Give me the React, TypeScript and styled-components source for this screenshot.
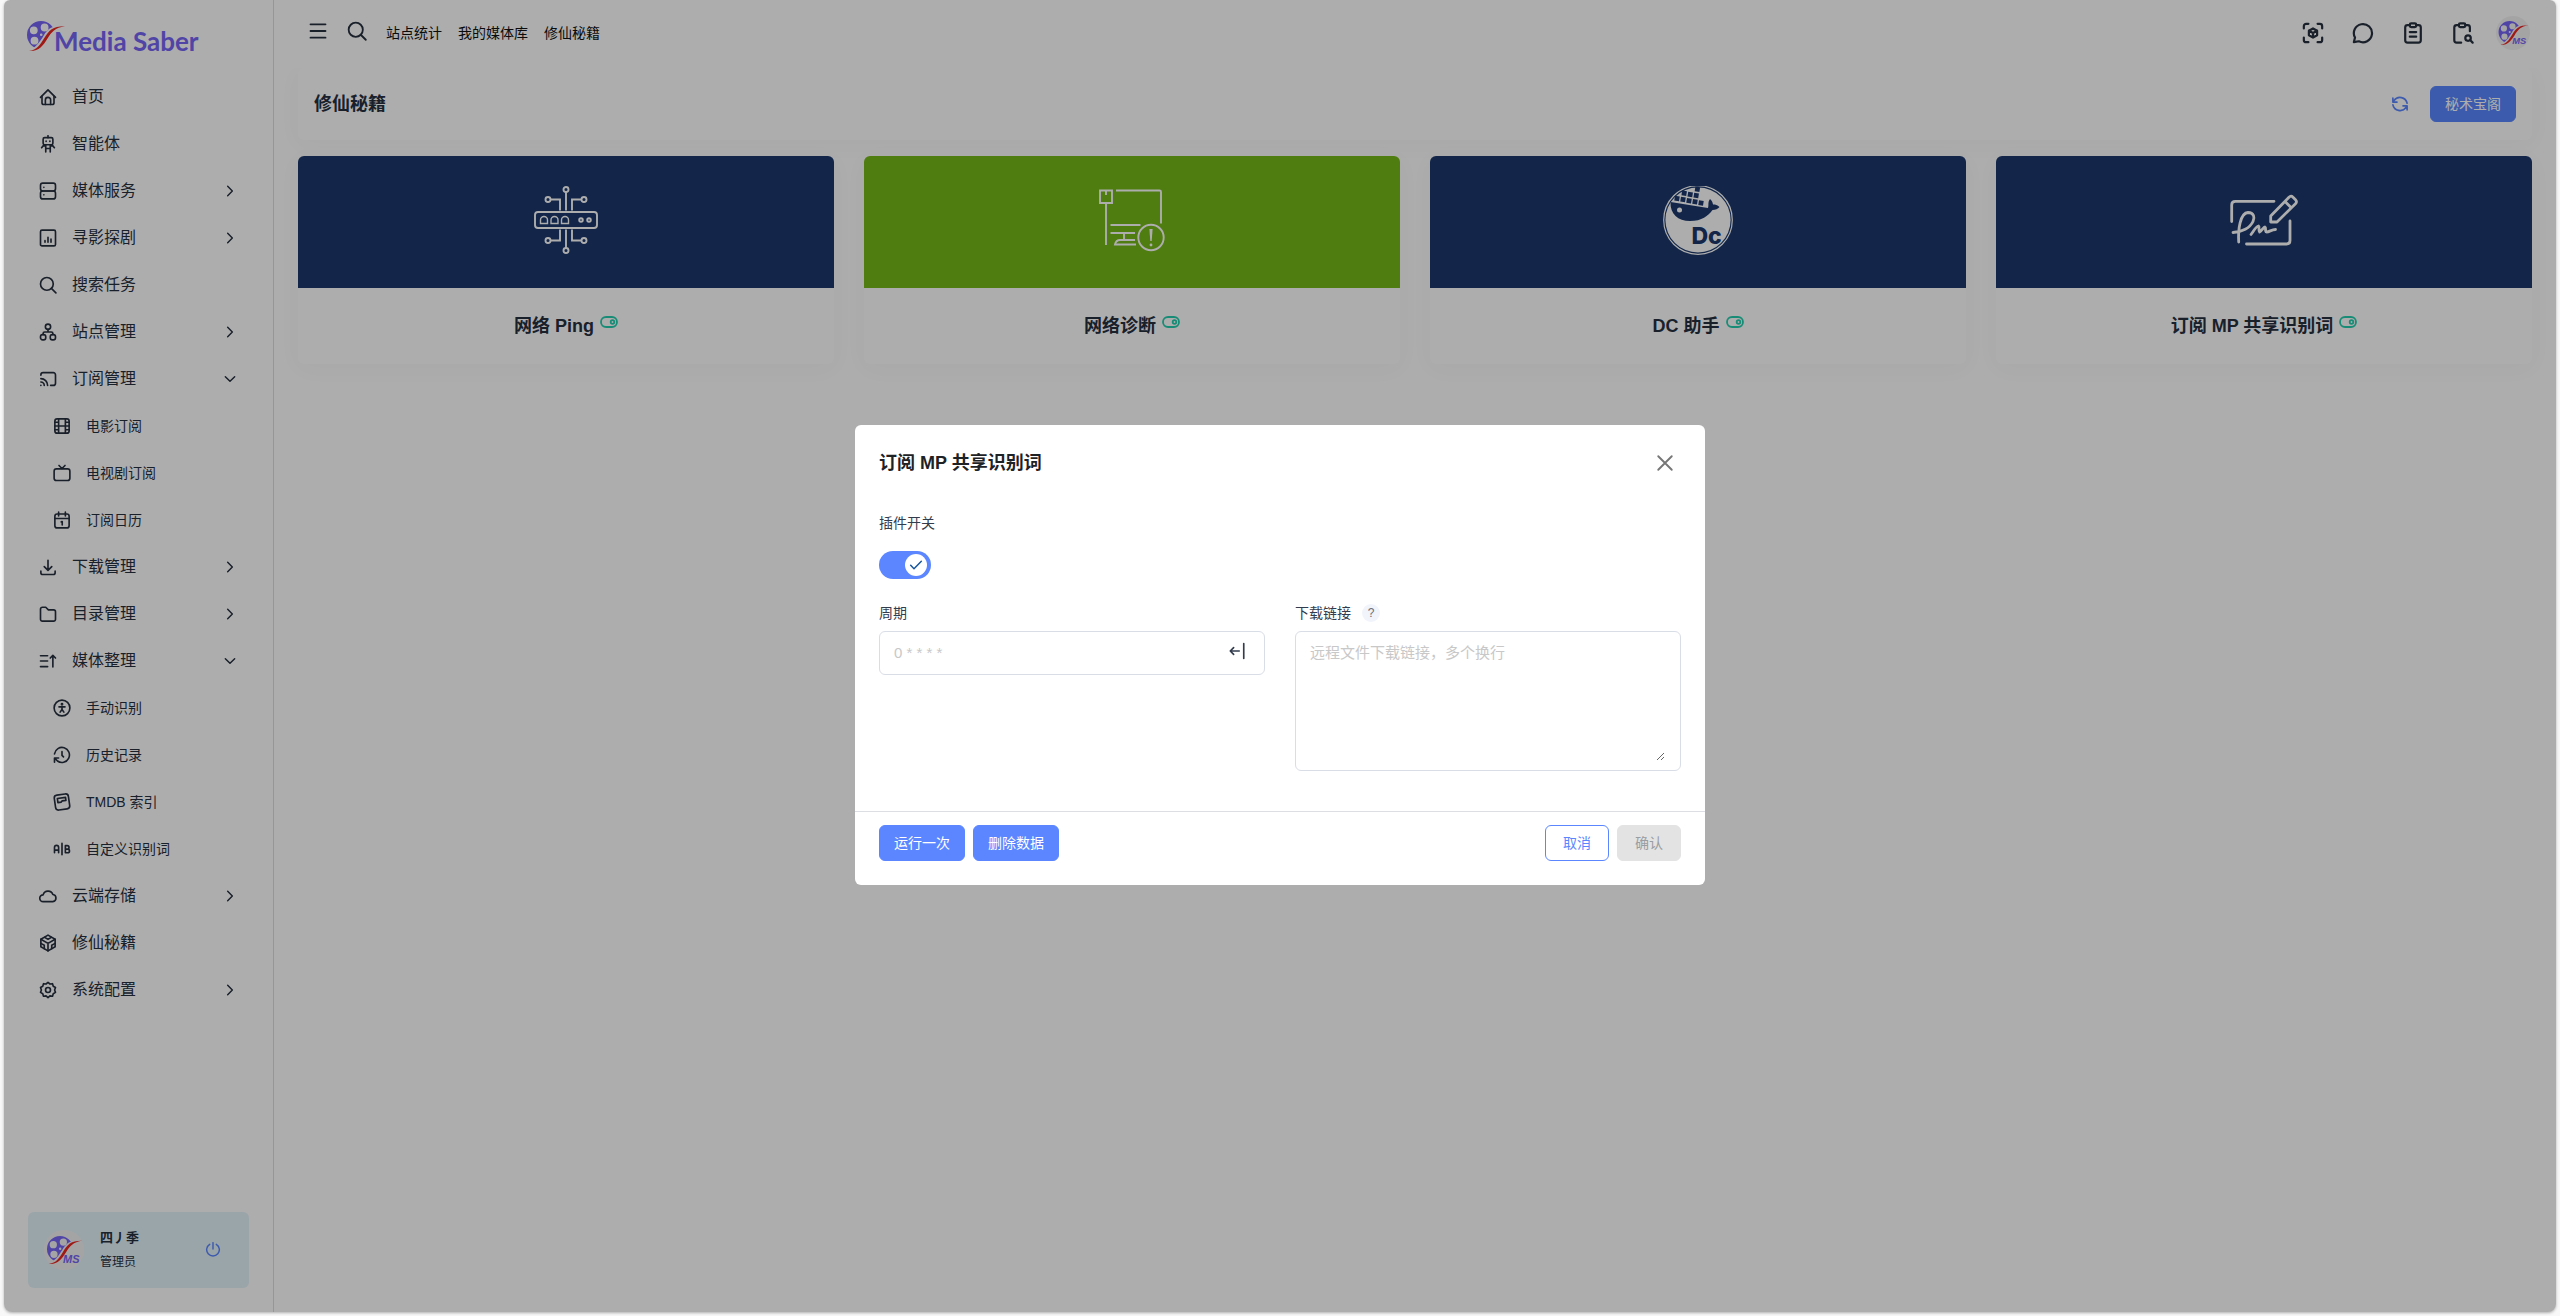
import React, { useState } from 'react';
import styled, { createGlobalStyle } from 'styled-components';

const GlobalStyle = createGlobalStyle`
  *, *::before, *::after { box-sizing: border-box; }
  body {
    margin: 0;
    background: #f8f8f8;
    color: #27303f;
    font-family: "Liberation Sans", "Noto Sans CJK SC", sans-serif;
    font-size: 14px;
  }
  button, input, textarea { font: inherit; }
  button { cursor: pointer; }
  h1, h2, h3, p, ul { margin: 0; padding: 0; }
`;

/* ---------- shell ---------- */

const Frame = styled.div`
  position: relative;
  display: grid;
  grid-template-columns: 270px minmax(0, 1fr);
  min-height: calc(100vh - 4px);
  margin: 0 4px 4px;
  overflow: hidden;
  border-radius: 6px 6px 8px 8px;
  background: #fff;
  box-shadow: 0 1px 3px rgba(0, 0, 0, 0.3);
`;

const Sidebar = styled.aside`
  display: flex;
  flex-direction: column;
  border-right: 1px solid #dedede;
`;

const Brand = styled.a`
  display: flex;
  align-items: center;
  height: 73px;
  padding: 0 22px;
  color: #7766f5;
  text-decoration: none;
`;

const BrandName = styled.span`
  margin-left: -14px;
  padding-top: 8px;
  font-family: Lato, sans-serif;
  font-size: 26px;
  font-weight: 700;
  line-height: 32px;
  white-space: nowrap;
`;

const Menu = styled.ul`
  flex: 1;
  list-style: none;
`;

const MenuLink = styled.a<{ $sub?: boolean }>`
  display: flex;
  align-items: center;
  gap: 15px;
  height: 47px;
  padding: 0 35px 0 ${(p) => (p.$sub ? 49 : 35)}px;
  color: #27303f;
  font-size: ${(p) => (p.$sub ? 14 : 16)}px;
  line-height: 24px;
  text-decoration: none;
`;

const MenuText = styled.span`
  flex: 1;
  white-space: nowrap;
`;

const UserPanel = styled.div`
  display: flex;
  align-items: center;
  height: 76px;
  margin: 24px;
  padding: 0 28px 0 16px;
  border-radius: 6px;
  background: #e4f3fb;
`;

const UserText = styled.div`
  flex: 1;
  margin-left: 16px;
`;

const UserName = styled.p`
  font-size: 13px;
  font-weight: 700;
  line-height: 24px;
`;

const UserRole = styled.p`
  font-size: 12px;
  line-height: 24px;
`;

const IconButton = styled.button<{ $color?: string }>`
  display: flex;
  align-items: center;
  justify-content: center;
  padding: 0;
  border: 0;
  background: none;
  color: ${(p) => p.$color ?? '#27303f'};
`;

/* ---------- top bar ---------- */

const TopBar = styled.header`
  position: relative;
  z-index: 1;
  display: flex;
  align-items: center;
  justify-content: space-between;
  height: 68px;
  padding: 0 26px 2px 34px;
  background: #fff;
`;

const TopLeft = styled.nav`
  display: flex;
  align-items: center;
  gap: 19px;
  padding-bottom: 4px;
`;

const TopLinks = styled.div`
  display: flex;
  gap: 16px;
  padding-top: 4px;
`;

const TopLink = styled.a`
  color: #111;
  font-size: 14px;
  line-height: 20px;
  text-decoration: none;
`;

const TopRight = styled.div`
  display: flex;
  align-items: center;
  gap: 22px;
`;

const Tools = styled.div`
  display: flex;
  align-items: center;
  gap: 28px;
`;

/* ---------- page ---------- */

const Page = styled.main`
  display: grid;
  gap: 16px;
  padding: 0 24px;
`;

const Panel = styled.section`
  border-radius: 6px;
  background: #fff;
  box-shadow: 0 4px 24px rgba(34, 41, 47, 0.03);
`;

const PageHead = styled(Panel)`
  display: flex;
  align-items: center;
  justify-content: space-between;
  height: 72px;
  padding: 0 16px;
`;

const PageTitle = styled.h1`
  font-size: 18px;
  line-height: 28px;
`;

const PageActions = styled.div`
  display: flex;
  align-items: center;
  gap: 21px;
`;

const Button = styled.button<{ $kind?: 'primary' | 'outline' | 'muted' }>`
  height: 36px;
  padding: 0 14px;
  border: 1px solid;
  border-radius: 6px;
  font-size: 14px;
  line-height: 20px;
  white-space: nowrap;
  ${(p) =>
    p.$kind === 'outline'
      ? 'min-width: 64px; border-color: #5b86ff; background: #fff; color: #5b86ff;'
      : p.$kind === 'muted'
        ? 'min-width: 64px; border-color: #e3e3e3; background: #e3e3e3; color: #9a9da1; cursor: default;'
        : 'border-color: #5b86ff; background: #5b86ff; color: #fff;'}
`;

const CardGrid = styled.div`
  display: grid;
  grid-template-columns: repeat(4, minmax(0, 1fr));
  gap: 30px;
`;

const Card = styled(Panel).attrs({ as: 'article' })`
  overflow: hidden;
`;

const CardArt = styled.div<{ $color: string }>`
  display: flex;
  align-items: center;
  justify-content: center;
  height: 132px;
  background: ${(p) => p.$color};
  color: #fff;
`;

const CardBody = styled.div`
  display: flex;
  justify-content: center;
  gap: 6px;
  padding: 24px 16px;
  color: #24cfae;
`;

const CardTitle = styled.h2`
  color: #27303f;
  font-size: 18px;
  line-height: 28px;
`;

/* ---------- dialog ---------- */

const Backdrop = styled.div`
  position: absolute;
  inset: 0;
  z-index: 2;
  display: flex;
  align-items: center;
  justify-content: center;
  padding-bottom: 2px;
  background: rgba(0, 0, 0, 0.32);
`;

const Dialog = styled.form`
  width: 850px;
  max-width: 100%;
  border-radius: 6px;
  background: #fff;
`;

const DialogHead = styled.div`
  display: flex;
  align-items: center;
  justify-content: space-between;
  padding: 24px 31px 24px 24px;
`;

const DialogTitle = styled.h2`
  color: #1f2225;
  font-size: 18px;
  line-height: 28px;
`;

const DialogBody = styled.div`
  display: grid;
  grid-template-columns: repeat(2, minmax(0, 1fr));
  gap: 24px 30px;
  padding: 12px 24px 40px;
`;

const Field = styled.div<{ $wide?: boolean; $gap?: number }>`
  display: flex;
  flex-direction: column;
  gap: ${(p) => p.$gap ?? 8}px;
  ${(p) => (p.$wide ? 'grid-column: 1 / -1;' : '')}
`;

const LabelRow = styled.div`
  display: flex;
  align-items: center;
  gap: 11px;
  height: 20px;
`;

const Label = styled.label`
  color: #333c4d;
  font-size: 14px;
  line-height: 20px;
`;

const Hint = styled.span`
  width: 18px;
  height: 18px;
  border-radius: 50%;
  background: #f1f4fb;
  color: #6b7078;
  font-size: 12px;
  line-height: 19px;
  text-align: center;
`;

const Switch = styled.span`
  position: relative;
  display: block;
  width: 52px;
  height: 28px;
`;

const SwitchInput = styled.input`
  appearance: none;
  width: 100%;
  height: 100%;
  margin: 0;
  border-radius: 14px;
  background: #c4c9d4;
  cursor: pointer;
  &:checked { background: #5b86ff; }
`;

const Knob = styled.span<{ $on: boolean }>`
  position: absolute;
  top: 3px;
  left: ${(p) => (p.$on ? 26 : 3)}px;
  display: flex;
  align-items: center;
  justify-content: center;
  width: 22px;
  height: 22px;
  border-radius: 50%;
  background: #fff;
  color: #17549c;
  pointer-events: none;
`;

const Box = styled.div`
  display: flex;
  border: 1px solid #d9dde6;
  border-radius: 6px;
`;

const InputBox = styled(Box)`
  align-items: center;
  height: 44px;
  padding: 0 18px 0 14px;
`;

const TextInput = styled.input`
  flex: 1;
  min-width: 0;
  padding: 0;
  border: 0;
  outline: 0;
  background: none;
  font-size: 15px;
  line-height: 22px;
  &::placeholder { color: #c8c8c8; }
`;

const InputAction = styled(IconButton)`
  padding-bottom: 4px;
`;

const AreaBox = styled(Box)`
  padding: 10px 15px 9px 14px;
`;

const TextArea = styled.textarea`
  display: block;
  width: 100%;
  height: 119px;
  padding: 0;
  border: 0;
  outline: 0;
  background: none;
  font-size: 15px;
  line-height: 22px;
  resize: vertical;
  &::placeholder { color: #c8c8c8; }
`;

const DialogFoot = styled.div`
  display: flex;
  justify-content: space-between;
  padding: 13px 24px 24px;
  border-top: 1px solid #dcdee4;
`;

const ButtonGroup = styled.div`
  display: flex;
  gap: 8px;
`;

/* ---------- icons ---------- */

type IconProps = { size?: number; stroke?: number; children: React.ReactNode };

const Icon = ({ size = 20, stroke = 2.2, children }: IconProps) => (
  <svg
    width={size}
    height={size}
    viewBox="0 0 24 24"
    fill="none"
    stroke="currentColor"
    strokeWidth={stroke}
    strokeLinecap="round"
    strokeLinejoin="round"
    aria-hidden="true"
  >
    {children}
  </svg>
);

const icons = {
  home: (
    <>
      <path d="M2 12.5 12 2.5l10 10" />
      <path d="M4 11v8.5A2.5 2.5 0 0 0 6.500 22h11a2.5 2.500 0 0 0 2.500-2.500V11" />
      <path d="M8.500 22v-6a3.500 3.500 0 0 1 7 0v6" />
    </>
  ),
  robot: (
    <>
      <rect x="5.500" y="3.500" width="13" height="9.500" rx="2" />
      <path d="M12 1v2.500M9.500 8v.5M14.500 8v.5M9 13v9.500M15 13v9.500M9 18h6M9 14.500H5.500L3.500 17M15 14.500h3.500l2 2.500" />
    </>
  ),
  server: (
    <>
      <rect x="2" y="1.500" width="20" height="10.500" rx="3" />
      <rect x="2" y="12" width="20" height="10.500" rx="3" />
      <path d="M6.500 7v.1M6.500 17v.1" />
    </>
  ),
  chart: (
    <>
      <rect x="2" y="1.500" width="20" height="21" rx="2" />
      <path d="M8 17.500v-2M12 17.500V11M16 17.500v-4" />
    </>
  ),
  search: (
    <>
      <circle cx="10.500" cy="10.500" r="8.500" />
      <path d="m16.500 16.500 6 6" />
    </>
  ),
  sites: (
    <>
      <circle cx="12" cy="5" r="3.500" />
      <rect x="2" y="15.500" width="7" height="7" rx="2.800" />
      <rect x="15" y="15.500" width="7" height="7" rx="2.800" />
      <path d="M12 8.500V12M5.500 15.500V14a2 2 0 0 1 2-2h9a2 2 0 0 1 2 2v1.500" />
    </>
  ),
  cast: (
    <>
      <path d="M2.500 20.500v.01M7 20.500A4.500 4.500 0 0 0 2.500 16M11.500 20.500a9 9 0 0 0-9-9" />
      <path d="M15.500 20.500H19a3 3 0 0 0 3-3v-11a3 3 0 0 0-3-3H5.500a3 3 0 0 0-3 3V7" />
    </>
  ),
  film: (
    <>
      <rect x="2.500" y="2.500" width="19" height="19" rx="3" />
      <path d="M7.500 2.500v19M16.500 2.500v19M7.500 12h9M2.500 7h5M2.500 12h5M2.500 17h5M16.500 7h5M16.500 12h5M16.500 17h5" />
    </>
  ),
  tv: (
    <>
      <rect x="1.500" y="6.500" width="21" height="15.500" rx="3" />
      <path d="m8 2 4 4 4-4" />
    </>
  ),
  calendar: (
    <>
      <rect x="2.500" y="4" width="19" height="18.500" rx="3" />
      <path d="M2.500 10h19M7.500 1.500v5M16.500 1.500v5M11 14.500l1.300-.5v4.500" />
    </>
  ),
  download: (
    <>
      <path d="M12 3v13M7 11.500l5 5 5-5M2.500 17.500v2A2.500 2.500 0 0 0 5 22h14a2.500 2.500 0 0 0 2.500-2.500v-2" />
    </>
  ),
  folder: (
    <path d="M4.500 3H9l3.500 3.500h7A2.500 2.500 0 0 1 22 9v10a2.500 2.500 0 0 1-2.500 2.500h-15A2.500 2.500 0 0 1 2 19V5.500A2.500 2.500 0 0 1 4.500 3z" />
  ),
  sort: <path d="M2 5h9.500M2 12h9.500M2 19.500h9.500M18.500 20V5M15 8l3.500-3.500L22 8" />,
  person: (
    <>
      <circle cx="12" cy="12" r="10.500" />
      <circle cx="12" cy="7" r=".8" fill="currentColor" />
      <path d="M8 10.500h8M12 10.500v3.500M9.500 17.500 12 14l2.500 3.500" />
    </>
  ),
  history: (
    <>
      <path d="M2 10.500A10 10 0 1 1 6 20M2 21.500V16h5.500M2.500 16.500 6 20" />
      <path d="M12 7.500v5l2 2" />
    </>
  ),
  card: (
    <g transform="rotate(-8 12 12)">
      <rect x="2.500" y="2" width="19" height="20" rx="4" />
      <path d="M6.500 6.500h11v4h-5l-1.500 1.500h-4.500z" />
    </g>
  ),
  ab: (
    <path d="M2 17v-7a2.500 2.500 0 0 1 5.500 0v7M2 13.500h5.500M12 4.500v15M16.500 7.500v9.500h3a2.500 2.400 0 0 0 0-4.800h-3 2.500a2.300 2.300 0 0 0 0-4.700z" />
  ),
  cloud: (
    <path d="M5.500 19.500a4.500 4.500 0 0 1 0-9 6.800 6.800 0 0 1 13-.5 4.800 4.800 0 0 1 0 9.500z" />
  ),
  cube: (
    <>
      <path d="M21.500 7v10L12 22.500 2.500 17V7L12 1.500z" />
      <path d="m2.500 7 9.500 5.500L21.500 7M12 12.500v10M7.500 4.500l4.500 2.500 4.500-2.500M2.500 12.500l4.500 2.500v4.500M21.500 12.500 17 15v4.500" />
    </>
  ),
  gear: (
    <>
      <path d="M12 1.800l2.600 2.200 3.400-.4 1 3.300 3 1.700-1.200 3.400L22 15.200l-3 1.800-1 3.300-3.400-.4L12 22.200l-2.600-2.300-3.400.4-1-3.300-3-1.800L3.200 12 2 8.600l3-1.700 1-3.300 3.400.4z" />
      <circle cx="12" cy="12" r="3.300" />
    </>
  ),
  right: <path d="m8.500 5 7 7-7 7" />,
  down: <path d="m5 8.500 7 7 7-7" />,
  menu: <path d="M3 4h18M3 12h18M3 20h18" />,
  scan: (
    <>
      <path d="M2 7V4.500A2.500 2.500 0 0 1 4.500 2H7M17 2h2.500A2.500 2.500 0 0 1 22 4.500V7M22 17v2.500a2.500 2.500 0 0 1-2.500 2.500H17M7 22H4.500A2.500 2.500 0 0 1 2 19.500V17" />
      <path d="m12 7 4.500 2.500v5L12 17l-4.500-2.500v-5zM7.500 9.500 12 12l4.500-2.500M12 12v5" />
    </>
  ),
  chat: <path d="M2 22 3.300 17A9.900 9.900 0 1 1 7.500 21z" />,
  clipboard: (
    <>
      <path d="M8.500 3.500H6a2.500 2.500 0 0 0-2.500 2.500v14A2.500 2.500 0 0 0 6 22.500h12a2.500 2.500 0 0 0 2.500-2.500V6A2.500 2.500 0 0 0 18 3.500h-2.500" />
      <rect x="8.500" y="1.500" width="7" height="4" rx="1.500" />
      <path d="M8.500 11h7M8.500 16h7" />
    </>
  ),
  clipboardSearch: (
    <>
      <path d="M7.500 3.500H5A2.500 2.500 0 0 0 2.500 6v14A2.500 2.500 0 0 0 5 22.500h5M14.500 3.500H17A2.500 2.500 0 0 1 19.500 6v4" />
      <rect x="7.500" y="1.500" width="7" height="4" rx="1.500" />
      <circle cx="17.500" cy="17.500" r="3" />
      <path d="m20 20 2.500 2.500" />
    </>
  ),
  refresh: (
    <>
      <path d="M21.500 11A9.700 9.700 0 0 0 4 7.500L2.500 9.500M2.500 4v5.500H8" />
      <path d="M2.500 13A9.700 9.700 0 0 0 20 16.500l1.500-2M21.500 20v-5.500H16" />
    </>
  ),
  power: <path d="M7 3.500a9.500 9.500 0 1 0 10 0M12 1v9.500" />,
  close: <path d="M3 3l18 18M21 3 3 21" />,
  check: <path d="m4 12.500 5 5L20 6.500" />,
  toBar: <path d="M15 12H3M7.500 7.500 3 12l4.500 4.500M21 2v20" />,
};

type IconName = keyof typeof icons;

const Reel = () => (
  <>
    <clipPath id="reel-cut">
      <path d="M-16-16H16V-9C9-8 6-5 3 0 0 5-4 11-9 14L-16 16z" />
    </clipPath>
    <path
      clipPath="url(#reel-cut)"
      fill="#7766f5"
      fillRule="evenodd"
      d="M0-14a14 14 0 1 1 0 28a14 14 0 1 1 0-28z
         M-7.200-8.600a3.900 3.900 0 1 0 0 7.800a3.900 3.900 0 1 0 0-7.800z
         M3.600-11.400a3.900 3.900 0 1 0 0 7.800a3.900 3.900 0 1 0 0-7.800z
         M-6.500 1.800a3.900 3.900 0 1 0 0 7.800a3.900 3.900 0 1 0 0-7.800z
         M.2-1.600a1.300 1.300 0 1 0 0 2.600a1.300 1.300 0 1 0 0-2.600z"
    />
    <path
      fill="#eb2520"
      d="M-12 16C-4 15-1 10 3 3.500 8-5 12-9 24-8.800 14-7.500 10.500-3 6.500 3.500 2 11-3 17-12 16z"
    />
  </>
);

const Avatar = ({ size }: { size: number }) => (
  <svg width={size} height={size} viewBox="0 0 40 40" role="img" aria-label="MS">
    <circle cx="20" cy="20" r="20" fill="#f4f2f4" />
    <g transform="translate(16 19) scale(.93)">
      <Reel />
    </g>
    <text
      x="19"
      y="33"
      fill="#7766f5"
      fontFamily="Liberation Sans, sans-serif"
      fontSize="11"
      fontStyle="italic"
      fontWeight="700"
    >
      MS
    </text>
  </svg>
);

const Art = ({ children }: { children: React.ReactNode }) => (
  <svg
    width="72"
    height="72"
    viewBox="0 0 72 72"
    fill="none"
    stroke="currentColor"
    strokeWidth="1.900"
    aria-hidden="true"
  >
    {children}
  </svg>
);

const PingArt = () => (
  <Art>
    <circle cx="36" cy="3.500" r="2.500" />
    <circle cx="18" cy="13.500" r="2.500" />
    <circle cx="54" cy="13.500" r="2.500" />
    <circle cx="18" cy="54.500" r="2.500" />
    <circle cx="54" cy="54.500" r="2.500" />
    <circle cx="36" cy="64.500" r="2.500" />
    <path d="M36 6v18.500M20.500 13.500H30v11M51.500 13.500H42v11M36 43.500V62M20.500 54.500H30v-11M51.500 54.500H42v-11" />
    <rect x="5" y="26" width="62" height="16" rx="3" />
    <path
      d="M10.500 37.500V34a3.500 3.500 0 0 1 7 0v3.500zM21 37.500V34a3.500 3.500 0 0 1 7 0v3.500zM31.500 37.500V34a3.500 3.500 0 0 1 7 0v3.500z"
      strokeWidth="1.400"
    />
    <circle cx="51" cy="34" r="1.800" />
    <circle cx="59" cy="34" r="1.800" />
  </Art>
);

const DiagnoseArt = () => (
  <Art>
    <path d="M4 4.500h12v12.500H4zM10 4.500V9M10 17v42" />
    <path d="M20 4.500h43.500q1.500 0 1.500 1.500v31.500M14.500 39h30M14.500 47H39M28 47v7M39 54H24q-4 0-5 4.500h21" />
    <circle cx="55" cy="51.500" r="12.700" />
    <path d="M53.400 43h3.200l-.9 12h-1.400z" fill="currentColor" stroke="none" />
    <circle cx="55" cy="59" r="1.400" fill="currentColor" stroke="none" />
  </Art>
);

const boxes = [
  [15, 12.5], [21, 13.6], [27, 14.7], [33, 15.8], [39, 16.9],
  [22.2, 7.3], [28.2, 8.4], [34.2, 9.5], [35.4, 3.3],
];

const DockerArt = () => (
  <Art>
    <circle cx="36" cy="34" r="34.300" strokeWidth="1.200" />
    <circle cx="36" cy="34" r="32.600" fill="currentColor" stroke="none" />
    <g fill="#1c396d" stroke="none">
      {boxes.map(([x, y]) => (
        <rect
          key={`${x}-${y}`}
          x={x - 2.4}
          y={y - 2.4}
          width="4.800"
          height="4.800"
          transform={`rotate(9 ${x} ${y})`}
        />
      ))}
      <path d="M8.500 16 46 22c1-3-.5-6 2-9 2 1.500 2.500 3 3 5.500 2.500 0 4.500.5 6.500 2.500-1.500 2-4 3-7 3C46 30 40 35 28 35 16 35 8 28 8.500 16z" />
      <text x="29.500" y="57.500" fontFamily="Inter, sans-serif" fontSize="23" fontWeight="800">
        Dc
      </text>
    </g>
    <circle cx="17.500" cy="24" r="2.500" fill="currentColor" stroke="none" />
  </Art>
);

const SignArt = () => (
  <Art>
    <g strokeWidth="2.800" strokeLinecap="round" strokeLinejoin="round">
      <path d="M3.700 35.500V19q0-3.700 3.700-3.700H46M62 35v19.500q0 3.500-3.500 3.500H18.500" />
      <path d="M42.700 36v-6L61 11.200q2-2 4 0l2.500 2.500q2 2 0 4L49 36zM57 15.500l5.500 5.500" />
      <path d="M10.700 56C10 44 12 27 20 26.500c6 0 7 5 5 9C22 42 14 46 5 46.500" />
      <path d="M23 48.500c3-4 5-8 7.500-8.500 1.500 1-.5 5 1 6 2-1 4-5 5.500-5 1.500.5-.5 4.500 1.500 5 3 0 5-2.500 9-2.500" />
    </g>
  </Art>
);

const EnabledBadge = () => (
  <svg
    width="18"
    height="20"
    viewBox="0 0 18 20"
    fill="none"
    stroke="currentColor"
    strokeWidth="1.800"
    role="img"
    aria-label="已启用"
  >
    <rect x="1" y="5" width="16" height="10" rx="5" />
    <circle cx="12.500" cy="10" r="1.800" />
  </svg>
);

/* ---------- data ---------- */

type Entry = { icon: IconName; text: string; sub?: boolean; arrow?: 'right' | 'down' };

const entries: Entry[] = [
  { icon: 'home', text: '首页' },
  { icon: 'robot', text: '智能体' },
  { icon: 'server', text: '媒体服务', arrow: 'right' },
  { icon: 'chart', text: '寻影探剧', arrow: 'right' },
  { icon: 'search', text: '搜索任务' },
  { icon: 'sites', text: '站点管理', arrow: 'right' },
  { icon: 'cast', text: '订阅管理', arrow: 'down' },
  { icon: 'film', text: '电影订阅', sub: true },
  { icon: 'tv', text: '电视剧订阅', sub: true },
  { icon: 'calendar', text: '订阅日历', sub: true },
  { icon: 'download', text: '下载管理', arrow: 'right' },
  { icon: 'folder', text: '目录管理', arrow: 'right' },
  { icon: 'sort', text: '媒体整理', arrow: 'down' },
  { icon: 'person', text: '手动识别', sub: true },
  { icon: 'history', text: '历史记录', sub: true },
  { icon: 'card', text: 'TMDB 索引', sub: true },
  { icon: 'ab', text: '自定义识别词', sub: true },
  { icon: 'cloud', text: '云端存储', arrow: 'right' },
  { icon: 'cube', text: '修仙秘籍' },
  { icon: 'gear', text: '系统配置', arrow: 'right' },
];

const plugins = [
  { title: '网络 Ping', color: '#1c396d', Picture: PingArt },
  { title: '网络诊断', color: '#76b818', Picture: DiagnoseArt },
  { title: 'DC 助手', color: '#1c396d', Picture: DockerArt },
  { title: '订阅 MP 共享识别词', color: '#1c396d', Picture: SignArt },
];

const tools: { icon: IconName; label: string }[] = [
  { icon: 'scan', label: '识别' },
  { icon: 'chat', label: '消息' },
  { icon: 'clipboard', label: '日志' },
  { icon: 'clipboardSearch', label: '任务' },
];

/* ---------- parts ---------- */

const SideNav = () => (
  <Sidebar>
    <Brand href="#">
      <svg width="42" height="34" viewBox="-15 -15 42 34" aria-hidden="true">
        <Reel />
      </svg>
      <BrandName>Media Saber</BrandName>
    </Brand>
    <Menu>
      {entries.map((e) => (
        <li key={e.icon}>
          <MenuLink href="#" $sub={e.sub}>
            <Icon size={18}>{icons[e.icon]}</Icon>
            <MenuText>{e.text}</MenuText>
            {e.arrow && <Icon size={16}>{icons[e.arrow]}</Icon>}
          </MenuLink>
        </li>
      ))}
    </Menu>
    <UserPanel>
      <Avatar size={40} />
      <UserText>
        <UserName>四丿季</UserName>
        <UserRole>管理员</UserRole>
      </UserText>
      <IconButton type="button" $color="#5b86ff" aria-label="退出">
        <Icon size={16}>{icons.power}</Icon>
      </IconButton>
    </UserPanel>
  </Sidebar>
);

const SettingsDialog = () => {
  const [on, setOn] = useState(true);
  return (
    <Backdrop>
      <Dialog role="dialog" aria-labelledby="dialog-title" onSubmit={(e) => e.preventDefault()}>
        <DialogHead>
          <DialogTitle id="dialog-title">订阅 MP 共享识别词</DialogTitle>
          <IconButton type="button" $color="#767676" aria-label="关闭">
            <Icon size={18} stroke={2.5}>{icons.close}</Icon>
          </IconButton>
        </DialogHead>
        <DialogBody>
          <Field $wide $gap={18}>
            <Label htmlFor="plugin-on">插件开关</Label>
            <Switch>
              <SwitchInput
                id="plugin-on"
                type="checkbox"
                role="switch"
                checked={on}
                onChange={(e) => setOn(e.target.checked)}
              />
              <Knob $on={on}>{on && <Icon size={16}>{icons.check}</Icon>}</Knob>
            </Switch>
          </Field>
          <Field>
            <Label htmlFor="cycle">周期</Label>
            <InputBox>
              <TextInput id="cycle" placeholder="0 * * * *" />
              <InputAction type="button" $color="#333c4d" aria-label="填入">
                <Icon size={18}>{icons.toBar}</Icon>
              </InputAction>
            </InputBox>
          </Field>
          <Field>
            <LabelRow>
              <Label htmlFor="links">下载链接</Label>
              <Hint>?</Hint>
            </LabelRow>
            <AreaBox>
              <TextArea id="links" placeholder="远程文件下载链接，多个换行" />
            </AreaBox>
          </Field>
        </DialogBody>
        <DialogFoot>
          <ButtonGroup>
            <Button type="button">运行一次</Button>
            <Button type="button">删除数据</Button>
          </ButtonGroup>
          <ButtonGroup>
            <Button type="button" $kind="outline">取消</Button>
            <Button type="submit" $kind="muted" disabled>确认</Button>
          </ButtonGroup>
        </DialogFoot>
      </Dialog>
    </Backdrop>
  );
};

export default function App() {
  return (
    <>
      <GlobalStyle />
      <Frame>
        <SideNav />
        <div>
          <TopBar>
            <TopLeft>
              <IconButton type="button" aria-label="菜单">
                <Icon size={20}>{icons.menu}</Icon>
              </IconButton>
              <IconButton type="button" aria-label="搜索">
                <Icon size={20}>{icons.search}</Icon>
              </IconButton>
              <TopLinks>
                <TopLink href="#">站点统计</TopLink>
                <TopLink href="#">我的媒体库</TopLink>
                <TopLink href="#">修仙秘籍</TopLink>
              </TopLinks>
            </TopLeft>
            <TopRight>
              <Tools>
                {tools.map((t) => (
                  <IconButton key={t.icon} type="button" aria-label={t.label}>
                    <Icon size={22} stroke={2.4}>{icons[t.icon]}</Icon>
                  </IconButton>
                ))}
              </Tools>
              <Avatar size={34} />
            </TopRight>
          </TopBar>
          <Page>
            <PageHead>
              <PageTitle>修仙秘籍</PageTitle>
              <PageActions>
                <IconButton type="button" $color="#5b86ff" aria-label="刷新">
                  <Icon size={18}>{icons.refresh}</Icon>
                </IconButton>
                <Button type="button">秘术宝阁</Button>
              </PageActions>
            </PageHead>
            <CardGrid>
              {plugins.map(({ title, color, Picture }) => (
                <Card key={title}>
                  <CardArt $color={color}>
                    <Picture />
                  </CardArt>
                  <CardBody>
                    <CardTitle>{title}</CardTitle>
                    <EnabledBadge />
                  </CardBody>
                </Card>
              ))}
            </CardGrid>
          </Page>
        </div>
        <SettingsDialog />
      </Frame>
    </>
  );
}
